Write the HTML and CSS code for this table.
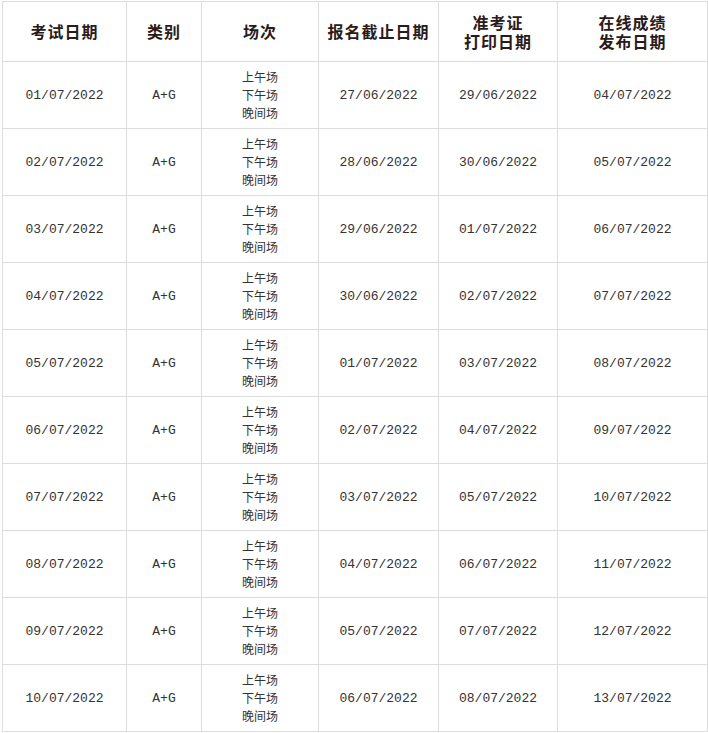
FILE: index.html
```html
<!DOCTYPE html>
<html lang="zh-CN">
<head>
<meta charset="utf-8">
<title>考试日期</title>
<link rel="stylesheet" href="styles.css">
</head>
<body>
<table class="schedule">
  <colgroup>
    <col class="c1"><col class="c2"><col class="c3"><col class="c4"><col class="c5"><col class="c6">
  </colgroup>
  <thead>
    <tr class="head-row">
      <th>考试日期</th>
      <th>类别</th>
      <th>场次</th>
      <th>报名截止日期</th>
      <th>准考证<br>打印日期</th>
      <th>在线成绩<br>发布日期</th>
    </tr>
  </thead>
  <tbody>
    <tr><td class="date">01/07/2022</td><td class="date">A+G</td><td class="sess">上午场<br>下午场<br>晚间场</td><td class="date">27/06/2022</td><td class="date">29/06/2022</td><td class="date">04/07/2022</td></tr>
    <tr><td class="date">02/07/2022</td><td class="date">A+G</td><td class="sess">上午场<br>下午场<br>晚间场</td><td class="date">28/06/2022</td><td class="date">30/06/2022</td><td class="date">05/07/2022</td></tr>
    <tr><td class="date">03/07/2022</td><td class="date">A+G</td><td class="sess">上午场<br>下午场<br>晚间场</td><td class="date">29/06/2022</td><td class="date">01/07/2022</td><td class="date">06/07/2022</td></tr>
    <tr><td class="date">04/07/2022</td><td class="date">A+G</td><td class="sess">上午场<br>下午场<br>晚间场</td><td class="date">30/06/2022</td><td class="date">02/07/2022</td><td class="date">07/07/2022</td></tr>
    <tr><td class="date">05/07/2022</td><td class="date">A+G</td><td class="sess">上午场<br>下午场<br>晚间场</td><td class="date">01/07/2022</td><td class="date">03/07/2022</td><td class="date">08/07/2022</td></tr>
    <tr><td class="date">06/07/2022</td><td class="date">A+G</td><td class="sess">上午场<br>下午场<br>晚间场</td><td class="date">02/07/2022</td><td class="date">04/07/2022</td><td class="date">09/07/2022</td></tr>
    <tr><td class="date">07/07/2022</td><td class="date">A+G</td><td class="sess">上午场<br>下午场<br>晚间场</td><td class="date">03/07/2022</td><td class="date">05/07/2022</td><td class="date">10/07/2022</td></tr>
    <tr><td class="date">08/07/2022</td><td class="date">A+G</td><td class="sess">上午场<br>下午场<br>晚间场</td><td class="date">04/07/2022</td><td class="date">06/07/2022</td><td class="date">11/07/2022</td></tr>
    <tr><td class="date">09/07/2022</td><td class="date">A+G</td><td class="sess">上午场<br>下午场<br>晚间场</td><td class="date">05/07/2022</td><td class="date">07/07/2022</td><td class="date">12/07/2022</td></tr>
    <tr><td class="date">10/07/2022</td><td class="date">A+G</td><td class="sess">上午场<br>下午场<br>晚间场</td><td class="date">06/07/2022</td><td class="date">08/07/2022</td><td class="date">13/07/2022</td></tr>
  </tbody>
</table>
</body>
</html>
```

FILE: styles.css
```css
html, body {
  margin: 0;
  padding: 0;
  background: #ffffff;
}

body {
  padding: 1px 0 0 2px;
  font-family: "Liberation Mono", "Noto Sans CJK SC", monospace;
  color: #333333;
}

.schedule {
  border-collapse: collapse;
  table-layout: fixed;
  width: 705px;
}

.c1 { width: 124px; }
.c2 { width: 75px; }
.c3 { width: 117px; }
.c4 { width: 120px; }
.c5 { width: 119px; }
.c6 { width: 150px; }

.schedule th,
.schedule td {
  border: 1px solid #dddddd;
  padding: 0;
  text-align: center;
  vertical-align: middle;
}

.head-row {
  height: 60px;
}

.schedule th {
  font-family: "Noto Sans CJK SC", sans-serif;
  font-size: 16px;
  font-weight: bold;
  line-height: 19px;
  letter-spacing: 1px;
  color: #2a1a1a;
}

.schedule tbody tr {
  height: 67px;
}

.date {
  font-family: "Liberation Mono", "Noto Sans CJK SC", monospace;
  font-size: 13px;
  color: #333333;
}

.sess {
  font-family: "Noto Sans CJK SC", sans-serif;
  font-size: 12px;
  line-height: 18px;
  color: #333333;
}
```
